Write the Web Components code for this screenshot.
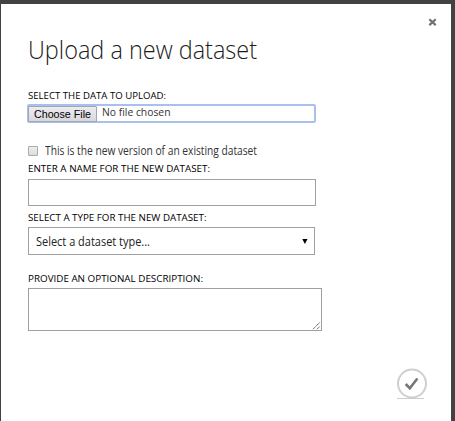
<!DOCTYPE html>
<html lang="en">
<head>
<meta charset="utf-8">
<title>Upload a new dataset</title>
<style>
html,body{margin:0;height:100%;overflow:hidden;background:#414243}
body{font-family:"Open Sans","Noto Sans",sans-serif;color:#111}
</style>
</head>
<body>
<upload-dialog>
  <fit-text slot="title" width="229">Upload a new dataset</fit-text>
  <field-label><fit-text width="138">SELECT THE DATA TO UPLOAD:</fit-text></field-label>
  <file-picker></file-picker>
  <check-option><fit-text width="212">This is the new version of an existing dataset</fit-text></check-option>
  <field-label style="height:16px"><fit-text width="182">ENTER A NAME FOR THE NEW DATASET:</fit-text></field-label>
  <text-field></text-field>
  <field-label style="height:21px;padding-bottom:3px"><fit-text width="178.5">SELECT A TYPE FOR THE NEW DATASET:</fit-text></field-label>
  <select-field><fit-text width="114">Select a dataset type...</fit-text></select-field>
  <field-label style="height:33px;padding-bottom:3px"><fit-text width="175">PROVIDE AN OPTIONAL DESCRIPTION:</fit-text></field-label>
  <text-box></text-box>
</upload-dialog>
<script>
const define = (name, html, setup) => {
  const template = document.createElement('template');
  template.innerHTML = html;
  customElements.define(name, class extends HTMLElement {
    constructor() {
      super();
      this.attachShadow({ mode: 'open' }).append(template.content.cloneNode(true));
    }
    connectedCallback() { if (setup) setup(this); }
  });
};

define('upload-dialog', `<style>
:host{display:flex;flex-direction:column;box-sizing:border-box;width:450px;height:417px;margin:4px 0 0 1px;padding:0 27px;background:#fff;overflow:hidden}
header{display:flex;justify-content:flex-end;height:26px;flex:none;margin-right:-27px;padding:14px 14px 0 0;box-sizing:border-box}
h1{margin:0;height:60px;flex:none;font-size:25.5px;line-height:39px;font-weight:300;color:#1c1c1c}
main{display:flex;flex-direction:column;align-items:flex-start}
footer{display:flex;justify-content:flex-end;margin-top:36px;margin-right:-5px}
</style><header><close-icon></close-icon></header><h1><slot name="title"></slot></h1><main><slot></slot></main><footer><confirm-button></confirm-button></footer>`);

define('close-icon', `<style>:host{display:block;width:9px;height:9px}svg{display:block}</style>
<svg width="9" height="9" viewBox="0 0 9 9"><path d="M1.3 1.3L7.7 7.1M7.7 1.3L1.3 7.1" stroke="#707070" stroke-width="2.2"/></svg>`);

define('field-label', `<style>:host{display:flex;align-items:flex-end;height:14px;box-sizing:border-box;padding-bottom:2px;font-size:9.8px;line-height:13px;color:#000}</style><slot></slot>`);

define('file-picker', `<style>
:host{display:flex;box-sizing:border-box;width:289px;height:19px;border:2px solid #a9c0ee;border-radius:2px;margin-left:-1px}
button{box-sizing:border-box;width:69px;height:16px;margin:0 0 0 -1px;padding:0;border:1px solid #a3a6b4;border-radius:1px;background:linear-gradient(#ededf1,#d7d7dd);font:11px/14px "Liberation Sans",sans-serif;color:#000}
.name{margin-left:5px;font-size:11.3px;line-height:12px;height:12px;color:#333}
</style><button><fit-text width="57">Choose File</fit-text></button><span class="name"><fit-text width="68.5">No file chosen</fit-text></span>`);

define('check-option', `<style>
:host{display:flex;align-items:center;height:17px;margin:19px 0 2px;font-size:12px;line-height:17px;color:#333}
i{box-sizing:border-box;width:10px;height:10px;border:1px solid #aaa;border-radius:1px;background:linear-gradient(#eee,#dcdcdc);margin-right:7px}
</style><i></i><slot></slot>`);

define('text-field', `<style>:host{display:block;box-sizing:border-box;width:288px;height:27px;border:1px solid #a0a0a0;margin-top:2px}</style>`);

define('select-field', `<style>
:host{display:flex;align-items:center;justify-content:space-between;box-sizing:border-box;width:287px;height:28px;border:1px solid #a0a0a0;padding:1px 6px 0 7px;font-size:12px;line-height:16px;color:#222}
svg{display:block}
</style><slot></slot><svg width="6" height="6"><path d="M.3 0h5.2L2.9 5.1z" fill="#000"/></svg>`);

define('text-box', `<style>
:host{display:flex;align-items:flex-end;justify-content:flex-end;box-sizing:border-box;width:294px;height:43px;border:1px solid #a0a0a0}
svg{display:block}
</style><svg width="9" height="9"><path d="M1 8.2L8 1.2M5 8.2L8 5.2" stroke="#555" stroke-width="1" stroke-dasharray="1.5 .5"/></svg>`);

define('confirm-button', `<style>:host{display:block;width:32px;height:34px}svg{display:block}</style>
<svg width="32" height="34" viewBox="0 0 32 34"><circle cx="15" cy="16.5" r="14" fill="#fff" stroke="#cfcfcf" stroke-width="2"/><path d="M8.7 17l4.1 4.2 7.6-9.7" fill="none" stroke="#777" stroke-width="2.6"/><path d="M0 31.5h27" stroke="#ccc"/></svg>`);

// Condenses the line horizontally so it occupies the requested width.
define('fit-text', `<style>:host{display:inline-block;white-space:nowrap;text-align:left}span{display:inline-block;transform-origin:0 50%}</style><span><slot></slot></span>`, host => {
  const span = host.shadowRoot.querySelector('span');
  const target = Number(host.getAttribute('width'));
  const natural = span.getBoundingClientRect().width;
  host.style.width = target + 'px';
  span.style.transform = `scaleX(${target / natural})`;
});
</script>
</body>
</html>
